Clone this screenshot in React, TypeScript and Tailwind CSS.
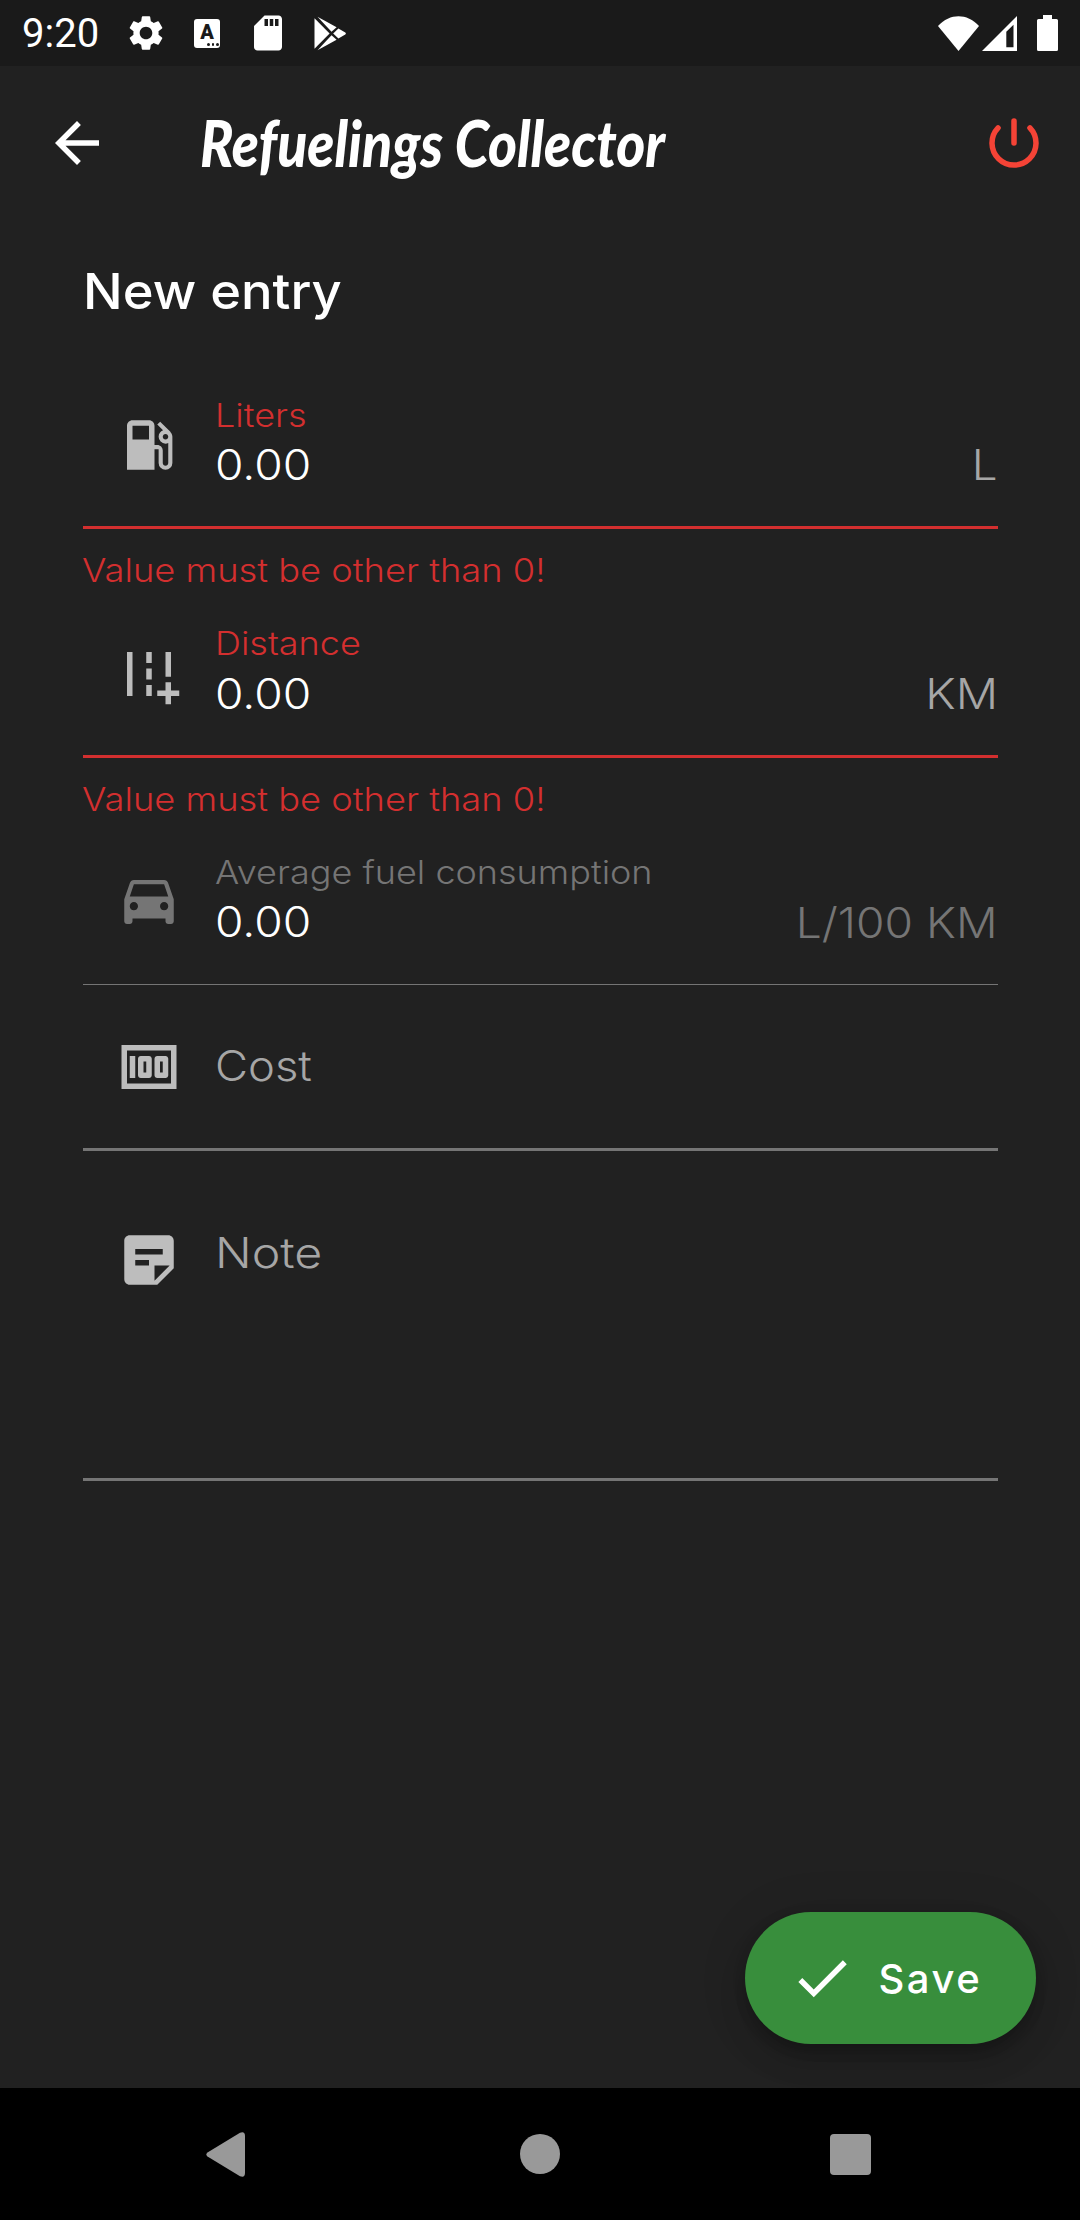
import type { IconType } from "react-icons";
import {
  MdAddRoad,
  MdArrowBack,
  MdCheck,
  MdDriveEta,
  MdLocalGasStation,
  MdMoney,
  MdSdCard,
  MdSettings,
  MdStickyNote2,
} from "react-icons/md";

function StatusBar() {
  return (
    <header className="flex h-[66px] shrink-0 items-center bg-[#1a1a1a] pr-[22px] pl-[22px] text-white">
      <span className="w-[103px] pt-[2px] font-['Roboto',sans-serif] text-[40px] leading-[66px] font-normal">9:20</span>
      <MdSettings className="size-[42px]" />
      <div className="relative ml-[27px] h-[29px] w-[26px] rounded-[3px] bg-white text-center font-['Roboto',sans-serif] text-[20px] leading-[27px] font-black text-[#1a1a1a]">
        A
        <span className="absolute right-[1.5px] bottom-[2px] flex gap-[2px]">
          <i className="size-[2.5px] rounded-full bg-[#1a1a1a]" />
          <i className="size-[2.5px] rounded-full bg-[#1a1a1a]" />
          <i className="size-[2.5px] rounded-full bg-[#1a1a1a]" />
        </span>
      </div>
      <MdSdCard className="ml-[27px] size-[42px]" />
      <svg className="ml-[25px] h-[35px] w-[33px]" viewBox="0 0 33 35" fill="currentColor">
        <path d="M.5 2.3 15.6 17.5.5 32.7Z" />
        <path d="M3.5.8 22.6 11.3 17.5 15.8Z" />
        <path d="M3.5 34.2 22.6 23.7 17.5 19.2Z" />
        <path d="M24.4 12.4 31.3 16.4Q32.6 17.5 31.3 18.6L24.4 22.6 19.2 17.5Z" />
      </svg>
      <div className="ml-auto flex items-center">
        <svg className="h-[35px] w-[41px]" viewBox="0 0 41 35" fill="currentColor">
          <path d="M0 10C12-3 29-3 41 10L20.5 35Z" />
        </svg>
        <svg className="ml-[3px] h-[35px] w-[35px]" viewBox="0 0 35 35" fill="currentColor" fillRule="evenodd">
          <path d="M0 35 35 0V35ZM24.3 15.7V31.3H31.5V8.8Z" />
        </svg>
        <svg className="ml-5 h-9 w-[21px]" viewBox="0 0 21 36" fill="currentColor">
          <path d="M6 0H15V4H19.5Q21 4 21 5.5V34.5Q21 36 19.5 36H1.5Q0 36 0 34.5V5.5Q0 4 1.5 4H6Z" />
        </svg>
      </div>
    </header>
  );
}

function AppBar() {
  return (
    <div className="flex h-[154px] shrink-0 items-center pr-[33px] pl-11 text-white">
      <MdArrowBack className="size-[66px]" />
      <h1 className="ml-[90px] origin-left scale-x-[0.865] font-['Lato',sans-serif] text-[64px] leading-[80px] font-black whitespace-nowrap italic">
        Refuelings Collector
      </h1>
      <svg
        className="ml-auto size-[66px] text-[#f44336]"
        viewBox="0 0 24 24"
        fill="none"
        stroke="currentColor"
        strokeWidth="2"
        strokeLinecap="round"
      >
        <path d="M12 4V12M6.2 6.5A8 8 0 1 0 17.8 6.5" />
      </svg>
    </div>
  );
}

type FieldProps = {
  icon: IconType;
  label: string;
  unit: string;
  error?: string;
  className: string;
  labelClass: string;
  iconClass: string;
  unitClass: string;
};

function Field({ icon: Icon, label, unit, error, className, labelClass, iconClass, unitClass }: FieldProps) {
  return (
    <section className={className}>
      <div className="flex h-[131px]">
        <div className="w-[132px] shrink-0 pt-[17px] pl-[33px]">
          <Icon className={iconClass} />
        </div>
        <div className="flex-1">
          <div className={labelClass}>{label}</div>
          <div className="mt-1 flex h-[52px] justify-between text-[42px] leading-[52px]">
            <span className="origin-left scale-x-[1.1] text-white">0.00</span>
            <span className={unitClass}>{unit}</span>
          </div>
        </div>
      </div>
      {error ? (
        <>
          <div className="h-[3px] bg-[#d32f2f]" />
          <p className="mt-[22px] -ml-px h-10 origin-left scale-x-[1.133] text-[32px] leading-10 text-[#d32f2f]">
            {error}
          </p>
        </>
      ) : (
        <div className="mt-px h-px bg-[#757575]" />
      )}
    </section>
  );
}

export default function App() {
  return (
    <div className="flex h-[2220px] w-[1080px] flex-col overflow-hidden bg-[#212121] font-['Inter',sans-serif] font-light">
      <StatusBar />
      <AppBar />
      <main className="flex flex-1 flex-col px-[82.5px] pt-[41px]">
        <h2 className="h-[60px] origin-left scale-x-[1.05] text-[50px] leading-[60px] font-medium text-white">
          New entry
        </h2>
        <Field
          icon={MdLocalGasStation}
          label="Liters"
          unit="L"
          error="Value must be other than 0!"
          className="mt-[74px] h-[229px]"
          iconClass="size-[66px] text-[#bdbdbd]"
          labelClass="h-10 origin-left translate-y-px scale-x-[1.125] text-[32px] leading-10 text-[#d32f2f]"
          unitClass="origin-right scale-x-[1.09] text-[#a6a6a6]"
        />
        <Field
          icon={MdAddRoad}
          label="Distance"
          unit="KM"
          error="Value must be other than 0!"
          className="h-[228px]"
          iconClass="size-[66px] text-[#bdbdbd]"
          labelClass="h-10 origin-left scale-x-[1.125] text-[32px] leading-10 text-[#d32f2f]"
          unitClass="origin-right scale-x-[1.12] text-[#a6a6a6]"
        />
        <Field
          icon={MdDriveEta}
          label="Average fuel consumption"
          unit="L/100 KM"
          className="h-[133px]"
          iconClass="size-[66px] text-[#757575]"
          labelClass="h-10 origin-left translate-y-px scale-x-[1.125] text-[32px] leading-10 text-[#757575]"
          unitClass="origin-right translate-y-px scale-x-[1.1] text-[#757575]"
        />
        <section className="flex h-[166px] border-b-[3px] border-[#757575] pt-[49px] pl-[33px] text-[#a6a6a6]">
          <MdMoney className="size-[66px] text-[#bdbdbd]" />
          <span className="mt-[6px] ml-[33px] h-[52px] origin-left scale-x-[1.08] text-[42px] leading-[52px]">Cost</span>
        </section>
        <section className="flex h-[330px] border-b-[3px] border-[#757575] pt-[76px] pl-[33px] text-[#a6a6a6]">
          <MdStickyNote2 className="size-[66px] text-[#bdbdbd]" />
          <span className="ml-[33px] h-[52px] origin-left scale-x-[1.15] text-[42px] leading-[52px]">Note</span>
        </section>
        <button className="mt-auto -mr-[38.5px] mb-11 flex h-[132px] w-[291.5px] items-center self-end rounded-full bg-[#388e3c] pl-11 text-[40px] font-medium tracking-[2.5px] text-white shadow-[0_8px_14px_-3px_rgba(0,0,0,0.2),0_17px_28px_rgba(0,0,0,0.14),0_3px_50px_rgba(0,0,0,0.12)]">
          <MdCheck className="size-[66px]" />
          <span className="mt-[2px] ml-6">Save</span>
        </button>
      </main>
      <nav className="relative flex h-[132px] shrink-0 items-center bg-black pl-[206px] text-[#999999]">
        <svg className="h-[45px] w-[39px]" viewBox="0 0 39 45" fill="currentColor">
          <path d="M1.5 20.5 34 .8Q39-1 39 4V41Q39 46 34 44.2L1.5 24.5Q-.8 22.5 1.5 20.5Z" />
        </svg>
        <div className="ml-[275px] size-10 rounded-full bg-current" />
        <div className="ml-[270px] size-[41px] rounded-[4px] bg-current" />
      </nav>
    </div>
  );
}
